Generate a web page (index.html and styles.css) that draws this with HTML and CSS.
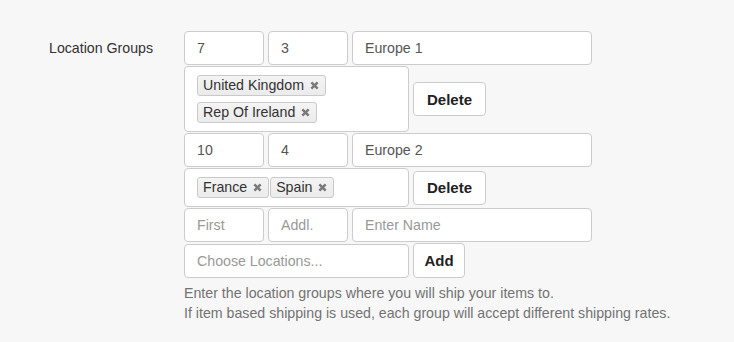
FILE: index.html
```html
<!DOCTYPE html>
<html>
<head>
<meta charset="utf-8">
<link rel="stylesheet" href="styles.css">
</head>
<body>
<div class="page">
  <div class="form-row">
    <label class="lbl">Location Groups</label>
    <div class="groups">
      <div class="fields">
        <input class="ctl w-num" type="text" value="7">
        <input class="ctl w-num" type="text" value="3">
        <input class="ctl w-name" type="text" value="Europe 1">
      </div>
      <div class="tag-row">
        <div class="tagbox">
          <span class="tag">United Kingdom<svg class="x" viewBox="0 0 10 10"><path d="M1.5 1.5L8.5 8.5M8.5 1.5L1.5 8.5"/></svg></span>
          <span class="tag">Rep Of Ireland<svg class="x" viewBox="0 0 10 10"><path d="M1.5 1.5L8.5 8.5M8.5 1.5L1.5 8.5"/></svg></span>
        </div>
        <button class="btn btn-del" type="button">Delete</button>
      </div>
      <div class="fields">
        <input class="ctl w-num" type="text" value="10">
        <input class="ctl w-num" type="text" value="4">
        <input class="ctl w-name" type="text" value="Europe 2">
      </div>
      <div class="tag-row">
        <div class="tagbox">
          <span class="tag">France<svg class="x" viewBox="0 0 10 10"><path d="M1.5 1.5L8.5 8.5M8.5 1.5L1.5 8.5"/></svg></span>
          <span class="tag">Spain<svg class="x" viewBox="0 0 10 10"><path d="M1.5 1.5L8.5 8.5M8.5 1.5L1.5 8.5"/></svg></span>
        </div>
        <button class="btn btn-del" type="button">Delete</button>
      </div>
      <div class="fields">
        <input class="ctl w-num" type="text" placeholder="First">
        <input class="ctl w-num" type="text" placeholder="Addl.">
        <input class="ctl w-name" type="text" placeholder="Enter Name">
      </div>
      <div class="tag-row">
        <input class="ctl w-choose" type="text" placeholder="Choose Locations...">
        <button class="btn btn-add" type="button">Add</button>
      </div>
      <p class="help">Enter the location groups where you will ship your items to.<br>If item based shipping is used, each group will accept different shipping rates.</p>
    </div>
  </div>
</div>
</body>
</html>
```
FILE: styles.css
```css
html, body {
  margin: 0;
  padding: 0;
  background: #f7f7f7;
}
body {
  font-family: "Liberation Sans", Arial, sans-serif;
  font-size: 14.2px;
  line-height: 20px;
  color: #333;
}
.page {
  padding: 31px 0 0 49px;
}
.form-row {
  display: flex;
  align-items: flex-start;
}
.lbl {
  width: 135px;
  flex: none;
  line-height: 34px;
  color: #333;
}
.groups {
  display: flex;
  flex-direction: column;
  gap: 1px;
}
.fields {
  display: flex;
  gap: 4px;
}
.ctl {
  box-sizing: border-box;
  height: 34px;
  margin: 0;
  padding: 6px 12px;
  border: 1px solid #ccc;
  border-radius: 4px;
  background: #fff;
  font-family: "Liberation Sans", Arial, sans-serif;
  font-size: 14.2px;
  color: #555;
  outline: none;
}
.ctl::placeholder {
  color: #999;
  opacity: 1;
}
.w-num { width: 80px; }
.w-name { width: 240px; }
.w-choose { width: 225px; }
.tag-row {
  display: flex;
  align-items: center;
  gap: 4px;
}
.tagbox {
  box-sizing: border-box;
  width: 225px;
  padding: 8px 12px 8px 12px;
  border: 1px solid #ccc;
  border-radius: 4px;
  background: #fff;
  display: flex;
  flex-wrap: wrap;
  row-gap: 6px;
  column-gap: 1px;
}
.tag {
  box-sizing: border-box;
  height: 21px;
  display: inline-flex;
  align-items: center;
  padding: 0 5px 0 5px;
  border: 1px solid #c9c9c9;
  border-radius: 3px;
  background: linear-gradient(#f4f4f4, #ebebeb);
  color: #333;
  font-size: 14.2px;
  line-height: 19px;
}
.x {
  width: 9px;
  height: 9px;
  margin-left: 6px;
  margin-right: 1px;
  fill: none;
  stroke: #7a7a7a;
  stroke-width: 2.8;
}
.btn {
  box-sizing: border-box;
  height: 34px;
  margin: 0;
  padding: 6px 10px;
  border: 1px solid #ccc;
  border-radius: 4px;
  background: #fff;
  font-family: "Liberation Sans", Arial, sans-serif;
  font-size: 15px;
  font-weight: bold;
  color: #222;
}
.btn-del { width: 73px; }
.btn-add { width: 52px; height: 35px; }
.help {
  margin: 4px 0 0 0;
  color: #737373;
  font-size: 14.2px;
  line-height: 20px;
}
```
